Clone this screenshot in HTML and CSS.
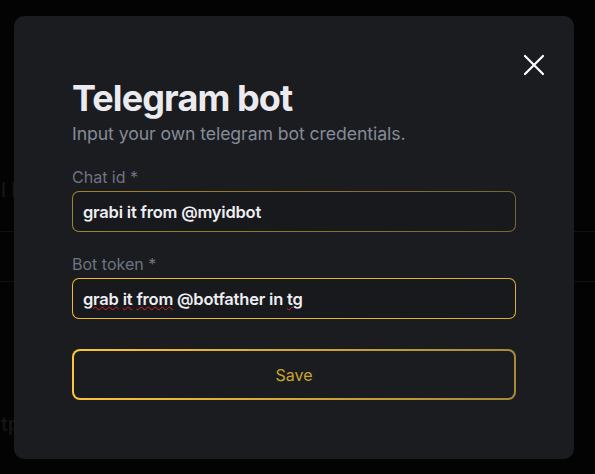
FILE: index.html
```html
<!DOCTYPE html>
<html lang="en">
<head>
<meta charset="utf-8">
<title>Telegram bot</title>
<link rel="stylesheet" href="styles.css">
</head>
<body>
<div class="backdrop">
  <div class="bg-row bg-row-top"><span class="bg-text">l b</span></div>
  <div class="bg-row bg-row-mid"></div>
  <div class="bg-row bg-row-low"><span class="bg-text">tp</span></div>
</div>
<div class="modal">
  <button class="close" aria-label="Close">
    <svg width="24" height="24" viewBox="0 0 24 24"><path d="M3 3 L21 21 M21 3 L3 21" stroke="#ffffff" stroke-width="2.2" stroke-linecap="round" fill="none"/></svg>
  </button>
  <h1 class="title">Telegram bot</h1>
  <p class="subtitle">Input your own telegram bot credentials.</p>
  <div class="field">
    <label class="label">Chat id *</label>
    <div class="input input-dim"><span>grabi it from @myidbot</span></div>
  </div>
  <div class="field">
    <label class="label">Bot token *</label>
    <div class="input input-active"><span><span class="typo">grab</span> <span class="typo">it</span> <span class="typo">from</span> @botfather in <span class="typo">tg</span></span></div>
  </div>
  <button class="save">Save</button>
</div>
</body>
</html>
```
FILE: styles.css
```css
html, body {
  margin: 0;
  padding: 0;
  background: #030303;
  width: 595px;
  height: 474px;
  overflow: hidden;
  font-family: Inter, "Noto Sans", sans-serif;
}
.backdrop {
  display: flex;
  flex-direction: column;
  padding-top: 178px;
}
.bg-row {
  color: #161616;
  font-size: 20px;
  font-weight: 500;
  white-space: pre;
  display: flex;
  width: 595px;
  box-sizing: border-box;
  padding-left: 1px;
}
.bg-row-top {
  height: 54px;
  border-bottom: 1px solid #101010;
}
.bg-row-mid {
  height: 50px;
  border-bottom: 1px solid #101010;
}
.bg-row-low {
  padding-top: 130px;
}
.modal {
  position: absolute;
  left: 14px;
  top: 16px;
  width: 560px;
  height: 443px;
  box-sizing: border-box;
  background: #1b1c20;
  border-radius: 10px;
  padding: 62px 58px 0 58px;
  display: flex;
  flex-direction: column;
}
.close {
  position: absolute;
  right: 28px;
  top: 37px;
  width: 24px;
  height: 24px;
  padding: 0;
  border: none;
  background: transparent;
  cursor: pointer;
}
.close svg { display: block; }
.title {
  margin: 0;
  font-size: 36px;
  line-height: 40px;
  font-weight: 700;
  letter-spacing: -0.9px;
  color: #ebebef;
}
.subtitle {
  margin: 4px 0 0 0;
  font-size: 17.7px;
  line-height: 24px;
  color: #858b98;
  letter-spacing: -0.1px;
}
.field {
  display: flex;
  flex-direction: column;
  margin-top: 21px;
}
.field + .field { margin-top: 22px; }
.label {
  font-size: 16px;
  line-height: 20px;
  color: #6d7482;
  margin-bottom: 4px;
}
.input {
  height: 41px;
  box-sizing: border-box;
  border: 1px solid transparent;
  border-radius: 7px;
  padding: 0 10px;
  display: flex;
  align-items: center;
  font-size: 16.5px;
  font-weight: 600;
  color: #eeeef2;
  letter-spacing: -0.2px;
  white-space: pre;
}
.input-dim {
  background: linear-gradient(#18191d, #18191d) padding-box,
              linear-gradient(90deg, #a0842e, #7a6630) border-box;
}
.input-active {
  background: linear-gradient(#18191d, #18191d) padding-box,
              linear-gradient(90deg, #f2bb2c, #dcae35) border-box;
}
.typo {
  text-decoration: underline wavy #e0202a;
  text-decoration-thickness: 1px;
  text-underline-offset: 1px;
}
.save {
  margin-top: 30px;
  height: 51px;
  border: 2px solid transparent;
  border-radius: 8px;
  background: linear-gradient(#1b1c20, #1b1c20) padding-box,
              linear-gradient(90deg, #fcc53a, #a8893a) border-box;
  color: #c9a332;
  font-family: Inter, "Noto Sans", sans-serif;
  font-size: 16px;
  cursor: pointer;
}
```
